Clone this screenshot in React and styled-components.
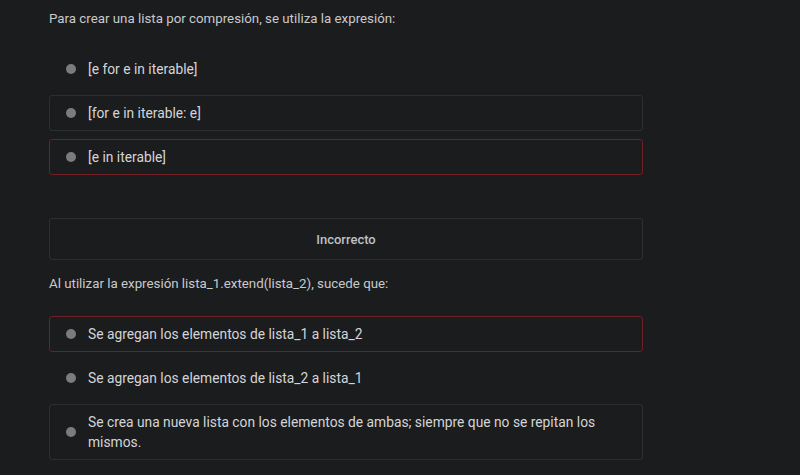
import React from "react"
import styled, { createGlobalStyle } from "styled-components"

const GlobalStyle = createGlobalStyle`
  body {
    margin: 0;
    background: #1b1c1e;
    font-family: Roboto, "Liberation Sans", sans-serif;
  }
`

const questions = [
  {
    text: "Para crear una lista por compresión, se utiliza la expresión:",
    options: [
      { label: "[e for e in iterable]", state: "plain" },
      { label: "[for e in iterable: e]", state: "boxed" },
      { label: "[e in iterable]", state: "wrong" },
    ],
    feedback: "Incorrecto",
  },
  {
    text: "Al utilizar la expresión lista_1.extend(lista_2), sucede que:",
    options: [
      { label: "Se agregan los elementos de lista_1 a lista_2", state: "wrong" },
      { label: "Se agregan los elementos de lista_2 a lista_1", state: "plain" },
      {
        label:
          "Se crea una nueva lista con los elementos de ambas; siempre que no se repitan los mismos.",
        state: "boxed",
      },
    ],
  },
]

function App() {
  return (
    <>
      <GlobalStyle />
      <Page>
        {questions.map((q, i) => (
          <Question key={i}>
            <Prompt>{q.text}</Prompt>
            <OptionList>
              {q.options.map((o, j) => (
                <Option key={j} $state={o.state}>
                  <Dot />
                  <Label>{o.label}</Label>
                </Option>
              ))}
            </OptionList>
            {q.feedback && <Feedback>{q.feedback}</Feedback>}
          </Question>
        ))}
      </Page>
    </>
  )
}

export default App

const Page = styled.div`
  width: 594px;
  padding: 9px 0 0 49px;
  display: flex;
  flex-direction: column;
  gap: 14px;
`
const Question = styled.section`
  display: flex;
  flex-direction: column;
`
const Prompt = styled.p`
  margin: 0;
  font-size: 13.3px;
  line-height: 20px;
  color: #c9cacc;
`
const OptionList = styled.div`
  margin-top: 22px;
  display: flex;
  flex-direction: column;
  gap: 8px;
`
const borders = {
  plain: "transparent",
  boxed: "#2d2f32",
  wrong: "#731d25",
}
const Option = styled.div`
  display: flex;
  align-items: center;
  gap: 12px;
  min-height: 20px;
  padding: 7px 16px;
  border: 1px solid ${(p) => borders[p.$state]};
  border-radius: 3px;
`
const Dot = styled.span`
  flex: none;
  width: 10px;
  height: 10px;
  border-radius: 50%;
  background: #7b7c7f;
`
const Label = styled.span`
  font-size: 13.8px;
  line-height: 20px;
  color: #d4d5d7;
`
const Feedback = styled.div`
  margin-top: 43px;
  height: 40px;
  border: 1px solid #2d2f32;
  border-radius: 3px;
  display: flex;
  align-items: center;
  justify-content: center;
  font-size: 13px;
  font-weight: 500;
  color: #bfc0c2;
`
